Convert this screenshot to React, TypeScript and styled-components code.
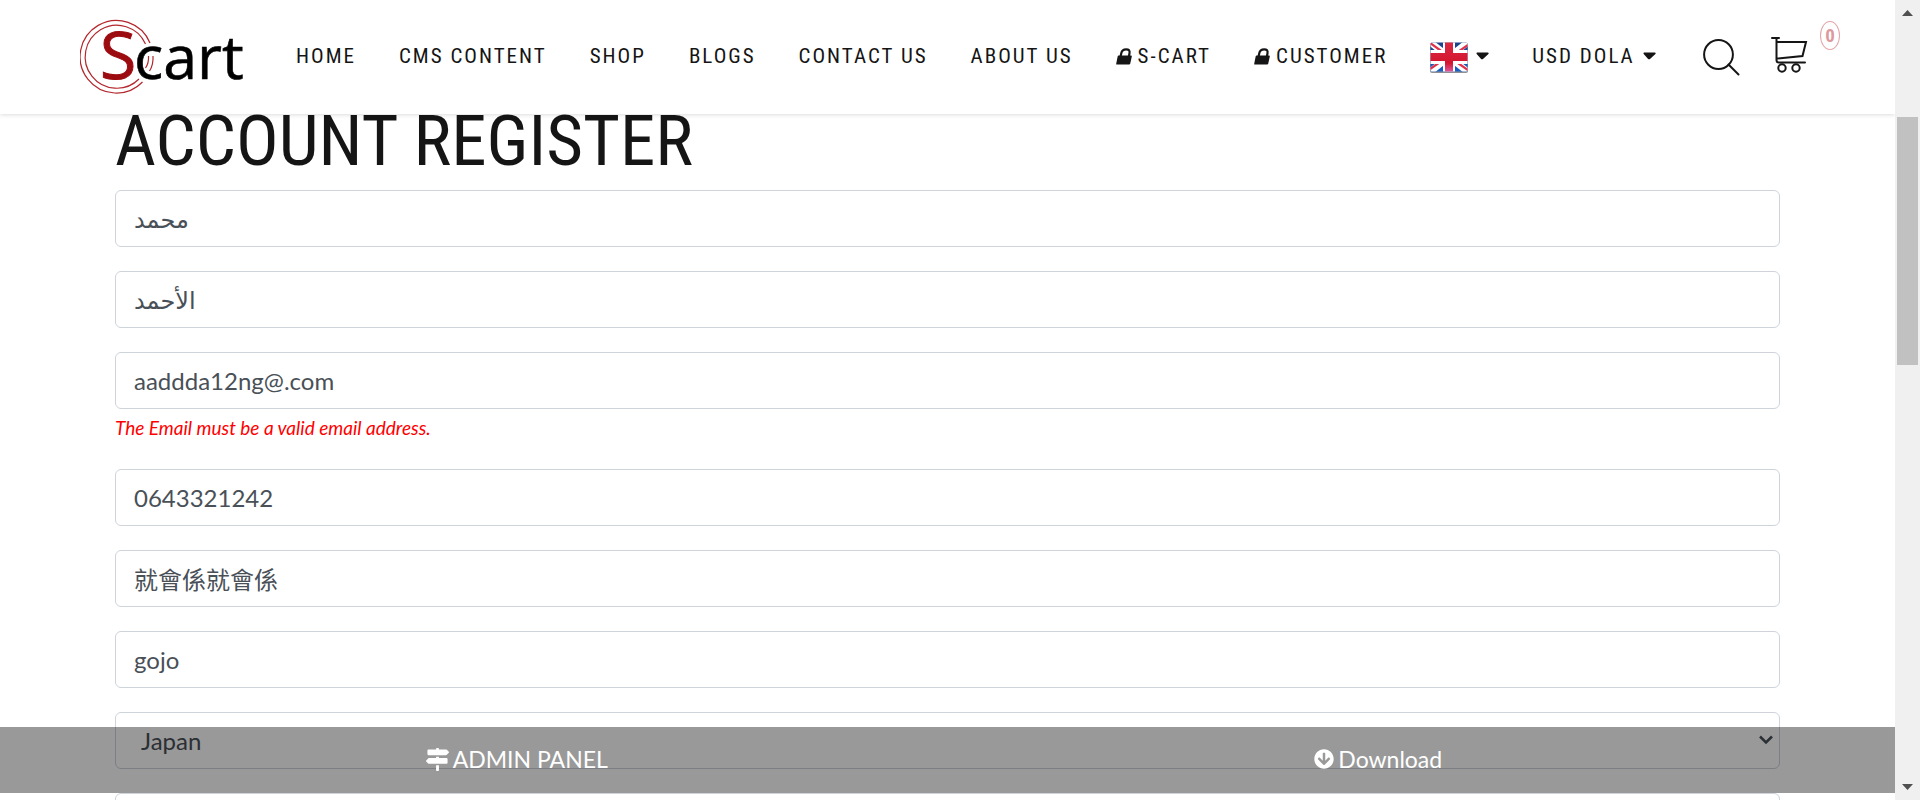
import React from 'react';
import styled, { createGlobalStyle } from 'styled-components';
import { FaMapSigns, FaArrowCircleDown } from 'react-icons/fa';

const condensed = "'Roboto Condensed', 'Liberation Sans Narrow', Roboto, sans-serif";
const body = "Lato, 'Noto Sans', 'DejaVu Sans', 'Noto Sans CJK TC', sans-serif";

const GlobalStyle = createGlobalStyle`
  *, *::before, *::after { box-sizing: border-box; }
  body { margin: 0; background: #fff; color: #151515; font-family: ${body}; }
`;

const Shell = styled.div`
  display: grid;
  grid-template-columns: minmax(0, 1fr) 25px;
  height: 100vh;
  overflow: hidden;
`;

const Page = styled.div`
  position: relative;
  overflow: hidden;
`;

const Header = styled.header`
  position: relative;
  z-index: 2;
  display: flex;
  align-items: center;
  height: 114px;
  padding: 0 55px 0 80px;
  background: #fff;
  box-shadow: 0 0 5px rgba(0, 0, 0, 0.2);
`;

const LogoLink = styled.a`
  display: flex;
  margin-right: 52px;
`;

const Nav = styled.nav`
  display: flex;
  align-items: center;
  gap: 43px;
  padding-bottom: 2px;
`;

const NavLink = styled.a`
  display: flex;
  align-items: center;
  height: 32px;
  font: 400 21px/32px ${condensed};
  letter-spacing: 2px;
  text-transform: uppercase;
  text-decoration: none;
  white-space: nowrap;
  color: #151515;
`;

const LockSvg = styled.svg`
  margin-right: 6px;
`;

const MenuButton = styled.button`
  display: flex;
  align-items: center;
  gap: 8px;
  height: 32px;
  padding: 0;
  border: 0;
  background: none;
  font: 400 21px/32px ${condensed};
  letter-spacing: 2px;
  white-space: nowrap;
  color: #151515;
`;

const Tools = styled.div`
  display: flex;
  align-items: center;
  gap: 31px;
  margin-left: auto;
`;

const IconButton = styled.button`
  display: flex;
  padding: 0;
  border: 0;
  background: none;
  color: #151515;
`;

const CartLink = styled.a`
  display: flex;
  align-items: flex-start;
  gap: 12px;
  height: 72px;
  text-decoration: none;
  color: #151515;
`;

const CartIcon = styled.svg`
  margin-top: 15px;
`;

const Count = styled.span`
  width: 20px;
  height: 29px;
  border: 1px solid #e3a5a9;
  border-radius: 50%;
  font: 700 19px/27px ${condensed};
  text-align: center;
  color: #dd9a9e;
`;

const Main = styled.main`
  padding: 0 115px;
`;

const Title = styled.h1`
  margin: -15px 0 7px;
  font: 400 71px/84px ${condensed};
  text-transform: uppercase;
  color: #151515;
`;

const Form = styled.form`
  display: flex;
  flex-direction: column;
  gap: 24px;
`;

const Field = styled.div`
  position: relative;
  display: flex;
  flex-direction: column;
`;

const Input = styled.input`
  width: 100%;
  height: 57px;
  padding: 0 18px;
  border: 1px solid #ced4da;
  border-radius: 6px;
  outline: 0;
  background: #fff;
  font: 400 24px/36px ${body};
  color: #495057;
`;

const Select = styled.select`
  width: 100%;
  height: 57px;
  padding: 0 25px;
  border: 1px solid #ced4da;
  border-radius: 6px;
  appearance: none;
  background: #fff;
  font: 400 24px/36px ${body};
  color: #495057;
`;

const Chevron = styled.svg`
  position: absolute;
  top: 23px;
  right: 7px;
  pointer-events: none;
`;

const ErrorText = styled.span`
  padding: 5px 0 3px;
  font: italic 400 19px/28px ${body};
  color: #f00;
`;

const BottomBar = styled.div`
  position: absolute;
  z-index: 3;
  right: 0;
  bottom: 7px;
  left: 0;
  display: flex;
  height: 66px;
  padding: 0 86px;
  background: rgba(0, 0, 0, 0.4);
`;

const BarLink = styled.a`
  display: flex;
  flex: 1;
  align-items: center;
  justify-content: center;
  gap: 4px;
  padding-bottom: 2px;
  font: 400 23px/64px ${body};
  text-decoration: none;
  color: #fff;
`;

const Scrollbar = styled.div`
  display: flex;
  flex-direction: column;
  align-items: center;
  justify-content: space-between;
  padding: 10px 0;
  background: #f0f0f0;
`;

const Track = styled.div`
  flex: 1;
  width: 21px;
  padding: 101px 0 0;
`;

const Thumb = styled.div`
  height: 248px;
  background: #c1c1c1;
`;

const Logo = () => (
  <svg width="164" height="104" viewBox="80 5 164 104" role="img" aria-label="Scart">
    <g fill="none" stroke="#b3272d" strokeWidth="1.2">
      <path d="M150 43 A36.300 36.300 0 1 0 142.500 82" />
      <path d="M145.500 44 A31.500 31.500 0 1 0 139 79" />
    </g>
    <text x="100" y="79" fontFamily="'Open Sans', sans-serif" fontSize="66" fill="#9c0b10" stroke="#9c0b10">S</text>
    <text x="134" y="79" fontFamily="'Open Sans', sans-serif" fontSize="61" fill="#000" stroke="#000" strokeWidth=".6">cart</text>
    <g fill="none" stroke="#b3272d" strokeWidth="1.200">
      <path d="M148.500 56 Q149 63 145.500 68" />
      <path d="M153 56 Q153.500 65 149.500 71" />
    </g>
  </svg>
);

const Lock = () => (
  <LockSvg width="16" height="17" viewBox="0 0 16 17" aria-hidden="true">
    <path d="M2.600 7.500H15q1 0 .8 1l-1.600 7.300q-.2.800-1.100.8H.9Q0 16.600.2 15.700L1.700 8.300Q1.900 7.500 2.600 7.500z" fill="#151515" />
    <path d="M4.600 8.500 5.200 5.500Q6 1.300 10.200 1.300 14.200 1.300 13.500 5.200L12.900 8.500" fill="none" stroke="#151515" strokeWidth="2.200" />
  </LockSvg>
);

const Caret = () => (
  <svg width="13" height="8" viewBox="0 0 13 8" aria-hidden="true">
    <path d="M1.500 .5h10.300c.9 0 1.200.8.6 1.400L7 6.900c-.7.600-1.400.6-1.900 0L.7 1.900C.2 1.200.6.5 1.500.5z" fill="#151515" />
  </svg>
);

const Flag = () => (
  <svg width="38" height="34" viewBox="0 -3 38 34" role="img" aria-label="English">
    <defs>
      <clipPath id="flagShape"><rect x=".5" y=".5" width="37" height="29" rx="1.500" /></clipPath>
      <linearGradient id="flagBlue" x1="0" y1="0" x2="0" y2="1">
        <stop offset="0" stopColor="#1c4187" />
        <stop offset="1" stopColor="#1761c4" />
      </linearGradient>
      <linearGradient id="flagRed" x1="0" y1="0" x2="0" y2="30" gradientUnits="userSpaceOnUse">
        <stop offset="0" stopColor="#dc2742" />
        <stop offset=".7" stopColor="#d3162f" />
        <stop offset="1" stopColor="#df5aa2" />
      </linearGradient>
    </defs>
    <rect y="1" width="38" height="30" rx="2" fill="#8f8f96" />
    <g clipPath="url(#flagShape)">
      <rect width="38" height="30" fill="url(#flagBlue)" />
      <path d="M0 0 38 30M38 0 0 30" stroke="#fff" strokeWidth="6.500" />
      <path d="M0 1 14 11M38 3 25 12M0 27 13 18M25 19 38 28" stroke="#e0304a" strokeWidth="2.200" />
      <path d="M13 0h12v30H13zM0 8h38v14H0z" fill="#fff" />
      <path d="M15 0h8v30h-8zM0 11h38v8H0z" fill="url(#flagRed)" />
    </g>
  </svg>
);

type NavItem = { label: string; locked?: boolean };

const navItems: NavItem[] = [
  { label: 'Home' },
  { label: 'CMS content' },
  { label: 'Shop' },
  { label: 'Blogs' },
  { label: 'Contact us' },
  { label: 'About us' },
  { label: 'S-cart', locked: true },
  { label: 'Customer', locked: true },
];

type FieldItem = { label: string; value: string; error?: string };

const fields: FieldItem[] = [
  { label: 'First name', value: 'محمد' },
  { label: 'Last name', value: 'الأحمد' },
  { label: 'Email', value: 'aaddda12ng@.com', error: 'The Email must be a valid email address.' },
  { label: 'Phone', value: '0643321242' },
  { label: 'Address 1', value: '就會係就會係' },
  { label: 'Address 2', value: 'gojo' },
];

export default function App() {
  return (
    <>
      <GlobalStyle />
      <Shell>
        <Page>
          <Header>
            <LogoLink href="#"><Logo /></LogoLink>
            <Nav>
              {navItems.map((item) => (
                <NavLink key={item.label} href="#">
                  {item.locked && <Lock />}
                  {item.label}
                </NavLink>
              ))}
              <MenuButton type="button"><Flag /><Caret /></MenuButton>
              <MenuButton type="button">USD DOLA<Caret /></MenuButton>
            </Nav>
            <Tools>
              <IconButton type="button" aria-label="Search">
                <svg width="37" height="37" viewBox="0 0 37 37" fill="none" stroke="currentColor" strokeWidth="2" strokeLinecap="round">
                  <circle cx="15.500" cy="15.500" r="14.400" />
                  <path d="M25.500 25.500 35.500 35.500" />
                </svg>
              </IconButton>
              <CartLink href="#" aria-label="Cart">
                <CartIcon width="37" height="37" viewBox="0 0 37 37" fill="none" stroke="currentColor" strokeWidth="2" strokeLinecap="round">
                  <path d="M1 2H8M5.500 2V24Q5.500 26.500 8 26.500H34M6 6H35L31.500 20 6 22.500" />
                  <circle cx="11" cy="32" r="3.700" />
                  <circle cx="25" cy="32" r="3.700" />
                </CartIcon>
                <Count>0</Count>
              </CartLink>
            </Tools>
          </Header>
          <Main>
            <Title>Account register</Title>
            <Form>
              {fields.map((field) => (
                <Field key={field.label}>
                  <Input aria-label={field.label} defaultValue={field.value} />
                  {field.error && <ErrorText>{field.error}</ErrorText>}
                </Field>
              ))}
              <Field>
                <Select aria-label="Country" defaultValue="Japan">
                  <option>Japan</option>
                </Select>
                <Chevron width="14" height="10" viewBox="0 0 14 10" fill="none" stroke="#495057" strokeWidth="2.500">
                  <path d="M1 1.500 7 7.500 13 1.500" />
                </Chevron>
              </Field>
              <Field>
                <Input aria-label="Password" type="password" />
              </Field>
            </Form>
          </Main>
          <BottomBar>
            <BarLink href="#"><FaMapSigns size={23} aria-hidden="true" />ADMIN PANEL</BarLink>
            <BarLink href="#"><FaArrowCircleDown size={20} aria-hidden="true" />Download</BarLink>
          </BottomBar>
        </Page>
        <Scrollbar aria-hidden="true">
          <svg width="11" height="6" viewBox="0 0 11 6"><path d="M5.500 0 11 6H0z" fill="#505050" /></svg>
          <Track><Thumb /></Track>
          <svg width="11" height="6" viewBox="0 0 11 6"><path d="M5.500 6 11 0H0z" fill="#505050" /></svg>
        </Scrollbar>
      </Shell>
    </>
  );
}
